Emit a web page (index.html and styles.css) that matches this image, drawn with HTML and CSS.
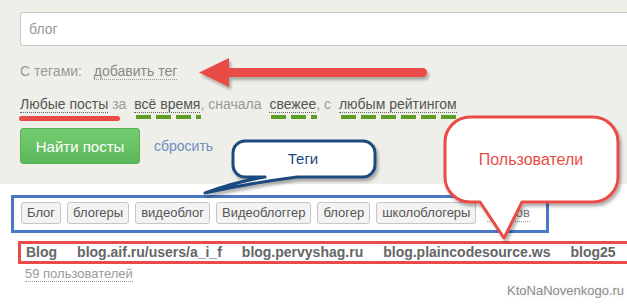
FILE: index.html
```html
<!DOCTYPE html>
<html lang="ru">
<head>
<meta charset="utf-8">
<title>Поиск постов</title>
<link rel="stylesheet" href="styles.css">
</head>
<body>
<div class="page">
  <section class="filters">
    <div class="search">блог</div>
    <div class="row tags-row">
      <span class="label">С тегами:</span>
      <a class="dotted add-tag">добавить тег</a>
    </div>
    <div class="row sort-row">
      <a class="dotted link mark-red">Любые посты</a> за <a class="dotted link gap mark-green">всё время</a>, сначала <a class="dotted link gap mark-green">свежее</a>, с <a class="dotted link gap mark-green">любым рейтингом</a>
    </div>
    <div class="actions">
      <button class="btn">Найти посты</button>
      <a class="reset">сбросить</a>
    </div>
  </section>
  <section class="results">
    <div class="tag-box">
      <span class="tag">Блог</span>
      <span class="tag">блогеры</span>
      <span class="tag">видеоблог</span>
      <span class="tag">Видеоблоггер</span>
      <span class="tag">блогер</span>
      <span class="tag">школоблогеры</span>
      <a class="dotted more">5 тегов</a>
    </div>
    <div class="users-box">
      <b>Blog</b>
      <b>blog.aif.ru/users/a_i_f</b>
      <b>blog.pervyshag.ru</b>
      <b>blog.plaincodesource.ws</b>
      <b>blog25</b>
    </div>
    <a class="dotted count">59 пользователей</a>
  </section>

  <svg class="overlay" width="627" height="304" viewBox="0 0 627 304">
    <defs>
      <filter id="sh" x="-20%" y="-40%" width="140%" height="180%">
        <feDropShadow dx="2" dy="3" stdDeviation="1.6" flood-color="#000" flood-opacity="0.3"/>
      </filter>
    </defs>
    <g filter="url(#sh)" fill="#e94b46">
      <polygon points="199,72.5 229,58 229,87"/>
      <line x1="226" y1="72.5" x2="422.5" y2="72.5" stroke="#e94b46" stroke-width="9" stroke-linecap="round"/>
    </g>
    <path filter="url(#sh)" d="M245 141 H363 A12 12 0 0 1 375 153 V165 A12 12 0 0 1 363 177 H297 Q250 183 205 193 Q235 182 265 177 H245 A12 12 0 0 1 233 165 V153 A12 12 0 0 1 245 141 Z" fill="#fff" stroke="#1f4a7f" stroke-width="3" stroke-linejoin="round"/>
    <text x="303" y="164" text-anchor="middle" class="callout-blue">Теги</text>
    <path filter="url(#sh)" d="M470 117 H593 A25 25 0 0 1 618 142 V177 A25 25 0 0 1 593 202 H522 L504 238 L480 202 H470 A25 25 0 0 1 445 177 V142 A25 25 0 0 1 470 117 Z" fill="#fff" stroke="#e94b46" stroke-width="3" stroke-linejoin="round"/>
    <text x="531" y="165" text-anchor="middle" class="callout-red">Пользователи</text>
  </svg>

  <div class="watermark">KtoNaNovenkogo.ru</div>
</div>
</body>
</html>
```

FILE: styles.css
```css
* { box-sizing: border-box; }
html, body { margin: 0; padding: 0; }
body {
  font-family: "Liberation Sans", Arial, sans-serif;
  background: #fff;
}
.page {
  position: relative;
  width: 627px;
  height: 304px;
  overflow: hidden;
}
.filters {
  background: #efefea;
  padding: 12px 0 20px 20px;
  height: 184px;
}
.search {
  height: 34px;
  margin-right: -20px;
  background: #fff;
  border: 1px solid #c9c9c9;
  border-right: none;
  border-radius: 3px 0 0 3px;
  padding-left: 8px;
  font-size: 14px;
  line-height: 32px;
  color: #999;
}
.row {
  font-size: 14px;
  line-height: 20px;
  color: #999;
  white-space: nowrap;
}
.tags-row { margin-top: 15px; }
.sort-row { margin-top: 13px; }
.dotted {
  border-bottom: 1px dotted #999;
  text-decoration: none;
}
.add-tag {
  color: #888;
  margin-left: 8px;
}
.link {
  position: relative;
  color: #555;
  border-bottom-color: #666;
}
.link.gap { margin-left: 4px; }
.mark-red::after {
  content: "";
  position: absolute;
  left: -1px;
  right: -12px;
  top: calc(100% + 4px);
  height: 5px;
  border-radius: 3px;
  background: #e94b46;
}
.mark-green::after {
  content: "";
  position: absolute;
  left: 2px;
  right: -1px;
  top: calc(100% + 3px);
  height: 4px;
  background: repeating-linear-gradient(90deg, #5b9e23 0 15px, transparent 15px 20px);
}
.actions {
  margin-top: 14px;
  display: flex;
  align-items: center;
}
.btn {
  width: 120px;
  height: 36px;
  border: 1px solid #58b055;
  border-radius: 3px;
  background: linear-gradient(#74cd70, #5cb85c);
  color: #fff;
  font-family: "Liberation Sans", Arial, sans-serif;
  font-size: 15px;
  padding: 0;
}
.reset {
  margin-left: 14px;
  font-size: 14px;
  color: #6d8ec2;
}
.results {
  padding-top: 11px;
}
.tag-box {
  width: 538px;
  margin-left: 11px;
  border: 3px solid #4a78c5;
  padding: 4px 0 6px 7px;
  display: flex;
  align-items: center;
  gap: 6px;
  white-space: nowrap;
}
.tag {
  flex-shrink: 0;
  height: 22px;
  line-height: 20px;
  padding: 0 5px;
  border: 1px solid #c6c6c6;
  border-radius: 3px;
  background: #f3f3f3;
  font-size: 13px;
  color: #555;
}
.more {
  flex-shrink: 0;
  margin-left: 5px;
  font-size: 13px;
  line-height: 16px;
  color: #777;
}
.users-box {
  margin-top: 8px;
  margin-left: 18px;
  width: 640px;
  height: 23px;
  border: 3px solid #e94b46;
  padding-left: 5px;
  display: flex;
  gap: 20px;
  font-size: 14px;
  line-height: 17px;
  color: #666;
  white-space: nowrap;
}
.count {
  display: inline-block;
  margin-top: 2px;
  margin-left: 25px;
  font-size: 13px;
  line-height: 15px;
  color: #999;
}
.overlay {
  position: absolute;
  left: 0;
  top: 0;
  pointer-events: none;
}
.callout-blue {
  font-family: "Liberation Sans", Arial, sans-serif;
  font-size: 15px;
  fill: #1f4a7f;
}
.callout-red {
  font-family: "Liberation Sans", Arial, sans-serif;
  font-size: 16px;
  fill: #e94b46;
}
.watermark {
  position: absolute;
  left: 507px;
  top: 283px;
  font-size: 13px;
  color: #8a8a8a;
  text-shadow: 0 0 3px #fff, 0 0 6px #ddd;
}
```
